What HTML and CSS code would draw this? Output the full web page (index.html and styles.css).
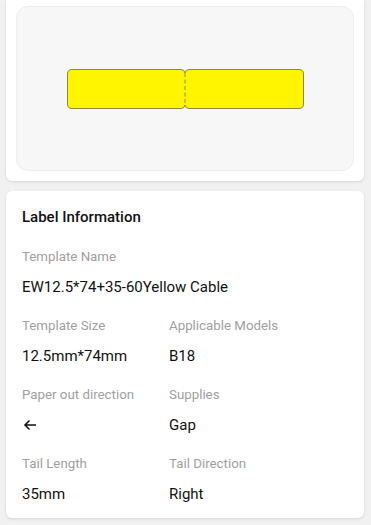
FILE: index.html
```html
<!DOCTYPE html>
<html>
<head>
<meta charset="utf-8">
<link rel="stylesheet" href="styles.css">
</head>
<body>
<div class="preview-card">
  <div class="preview-box">
    <svg class="labels" width="240" height="42" viewBox="0 0 240 42">
      <path d="M6 1.5 H115 Q118.5 1.5 119 5 Q119.5 1.5 123 1.5 H233 Q237.5 1.5 237.5 6 V36 Q237.5 40.5 233 40.5 H123 Q119.5 40.5 119 37 Q118.5 40.5 115 40.5 H6 Q1.5 40.5 1.5 36 V6 Q1.5 1.5 6 1.5 Z" fill="#fff500" stroke="#8f8a3a" stroke-width="1"/>
      <line x1="119" y1="5" x2="119" y2="37" stroke="#9a9240" stroke-width="1" stroke-dasharray="4 2.5"/>
    </svg>
  </div>
</div>
<div class="info-card">
  <div class="title">Label Information</div>
  <div class="field full">
    <div class="label">Template Name</div>
    <div class="value">EW12.5*74+35-60Yellow Cable</div>
  </div>
  <div class="grid">
    <div class="field">
      <div class="label">Template Size</div>
      <div class="value">12.5mm*74mm</div>
    </div>
    <div class="field">
      <div class="label">Applicable Models</div>
      <div class="value">B18</div>
    </div>
    <div class="field">
      <div class="label">Paper out direction</div>
      <div class="value"><svg class="arrow" width="14" height="12" viewBox="0 0 14 12"><path d="M13 6 H2 M6.5 1.5 L2 6 L6.5 10.5" fill="none" stroke="#111" stroke-width="1.5"/></svg></div>
    </div>
    <div class="field">
      <div class="label">Supplies</div>
      <div class="value">Gap</div>
    </div>
    <div class="field">
      <div class="label">Tail Length</div>
      <div class="value">35mm</div>
    </div>
    <div class="field">
      <div class="label">Tail Direction</div>
      <div class="value">Right</div>
    </div>
  </div>
</div>
</body>
</html>
```

FILE: styles.css
```css
* { box-sizing: border-box; }
html, body { margin: 0; padding: 0; }
body {
  background: #f1f1f1;
  font-family: Roboto, "Noto Sans", sans-serif;
  width: 371px;
  height: 525px;
  overflow: hidden;
}
.preview-card {
  margin: 0 7px 0 6px;
  background: #fff;
  padding: 6px 10px 10px 10px;
  border-radius: 0 0 6px 6px;
  box-shadow: 0 1px 3px rgba(0,0,0,0.12);
}
.preview-box {
  height: 165px;
  background: #f7f7f7;
  border: 1px solid #ededed;
  border-radius: 12px;
  display: flex;
  align-items: center;
  justify-content: center;
}
.labels { display: block; margin-left: 2px; }
.info-card {
  margin: 10px 7px 0 6px;
  background: #fff;
  border-radius: 6px;
  padding: 16px 16px 14px 16px;
  box-shadow: 0 1px 3px rgba(0,0,0,0.12);
}
.title {
  font-size: 15px;
  font-weight: 500;
  line-height: 20px;
  color: #111;
  margin-bottom: 20px;
}
.label {
  font-size: 13.3px;
  line-height: 20px;
  color: #a0a0a0;
  margin-bottom: 10px;
}
.value {
  font-size: 15px;
  line-height: 20px;
  color: #111;
  height: 20px;
  display: flex;
  align-items: center;
}
.full { margin-bottom: 19px; }
.grid {
  display: grid;
  grid-template-columns: 147px 1fr;
  row-gap: 19px;
}
.arrow { display: block; margin-left: 1px; }
```
